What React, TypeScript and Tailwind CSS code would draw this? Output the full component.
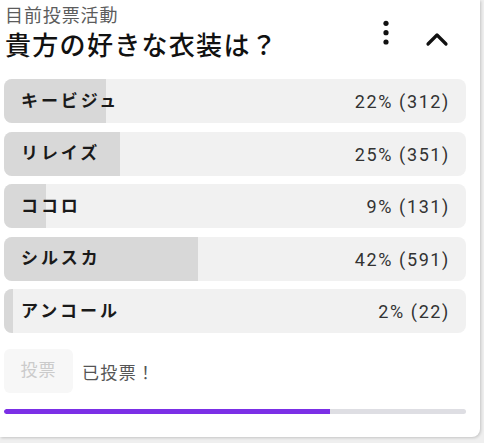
const options = [
  { label: "キービジュ", pct: 22, votes: 312 },
  { label: "リレイズ", pct: 25, votes: 351 },
  { label: "ココロ", pct: 9, votes: 131 },
  { label: "シルスカ", pct: 42, votes: 591 },
  { label: "アンコール", pct: 2, votes: 22 },
];

const font = { fontFamily: 'Roboto, "Noto Sans CJK JP", sans-serif' };

export default function App() {
  return (
    <div className="h-[443px] w-[484px] bg-[#efefef]" style={font}>
      <div className="flex h-[437px] w-[480px] flex-col rounded-br-lg bg-white pr-[14px] shadow-[1px_1px_3px_rgba(0,0,0,0.18)]">
        <div className="flex justify-between">
          <div className="pl-[5px] pt-[5px]">
            <div className="text-[18px] leading-[22px] tracking-[0.05em] text-[#5c5c5c]">目前投票活動</div>
            <div className="mt-[2px] text-[26px] font-medium leading-[34px] tracking-[0.05em] text-[#111]">
              貴方の好きな衣装は？
            </div>
          </div>
          <div className="flex items-start gap-[34px] pr-[17px] pt-[20px]">
            <svg width="10" height="26" viewBox="0 0 10 26" className="fill-[#111]">
              <circle cx="5" cy="3.3" r="2.6" />
              <circle cx="5" cy="12.7" r="2.6" />
              <circle cx="5" cy="22" r="2.6" />
            </svg>
            <svg width="24" height="16" viewBox="0 0 24 16" className="mt-[11px]" fill="none">
              <polyline points="3,13 12,4 21,13" stroke="#111" strokeWidth="3.2" strokeLinecap="round" strokeLinejoin="round" />
            </svg>
          </div>
        </div>

        <div className="mt-[16px] flex flex-col gap-[8.5px] pl-[4px]">
          {options.map((o) => (
            <div key={o.label} className="relative h-[44px] overflow-hidden rounded-lg bg-[#f1f1f1]">
              <div className="absolute inset-y-0 left-0 bg-[#d8d8d8]" style={{ width: `${o.pct}%` }} />
              <div className="relative flex h-full items-center justify-between pl-[17px] pr-[16px]">
                <span className="pt-[1px] text-[17px] font-bold tracking-[0.17em] text-[#1a1a1a]">{o.label}</span>
                <span className="pt-[1px] text-[18px] tracking-[0.09em] text-[#333]">
                  {o.pct}% ({o.votes})
                </span>
              </div>
            </div>
          ))}
        </div>

        <div className="mt-[16px] flex items-center gap-[9px] pl-[4px]">
          <button className="h-[44px] w-[69px] rounded-md bg-[#f7f7f7] text-[17px] tracking-[0.06em] text-[#cbcbcb]">
            投票
          </button>
          <span className="mt-[5px] text-[17px] tracking-[0.08em] text-[#555]">已投票！</span>
        </div>

        <div className="ml-[4px] mt-[16px] h-[5px] overflow-hidden rounded-full bg-[#dedee3]">
          <div className="h-full w-[70.5%] rounded-l-full bg-[#7b2fe6]" />
        </div>
      </div>
    </div>
  );
}
